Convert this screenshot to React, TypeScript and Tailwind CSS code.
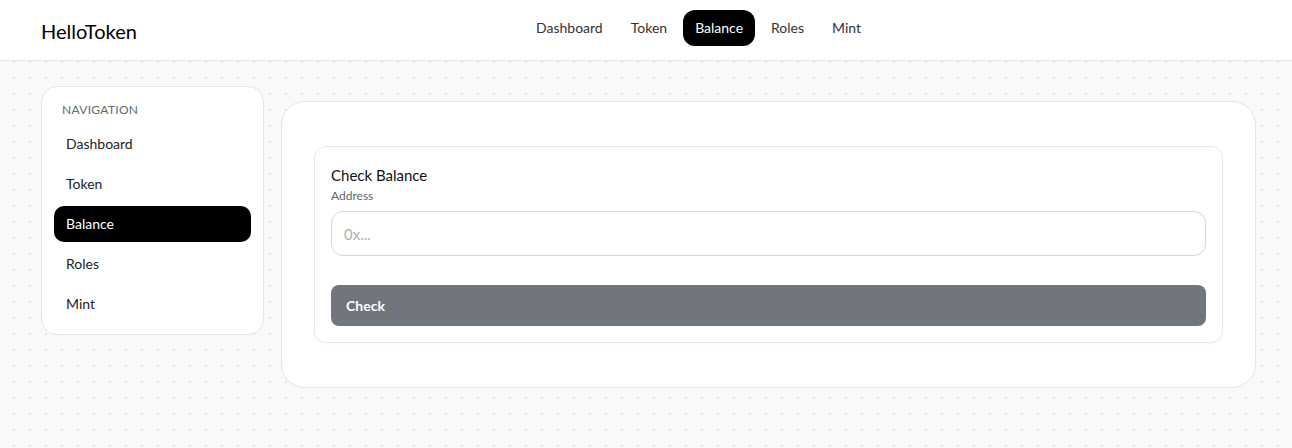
import { useState } from "react"

const links = ["Dashboard", "Token", "Balance", "Roles", "Mint"]

export default function App() {
  const [active, setActive] = useState("Balance")
  const [address, setAddress] = useState("")

  return (
    <div
      className="min-h-[448px] bg-[#f9f9f9] bg-[radial-gradient(#e4e4e4_1px,transparent_1px)] bg-[size:16px_16px] bg-[position:6px_6px] text-[#111]"
      style={{ fontFamily: "Lato, 'Open Sans', sans-serif" }}
    >
      {/* Header */}
      <header className="h-[61px] bg-white border-b border-[#e6e6e6] flex items-center pl-[41px]">
        <div className="w-[483px] text-xl text-black pt-[1px]">HelloToken</div>
        <nav className="flex items-center gap-1 mb-1">
          {links.map((l) => (
            <button
              key={l}
              onClick={() => setActive(l)}
              className={`h-9 px-3 rounded-xl text-sm ${
                active === l ? "bg-black text-white" : "text-[#333] hover:bg-gray-100"
              }`}
            >
              {l}
            </button>
          ))}
        </nav>
      </header>

      <div className="flex items-start gap-[17px] pl-[41px] pr-[36px] pt-[25px]">
        {/* Sidebar */}
        <aside className="w-[223px] shrink-0 bg-white border border-[#e5e5e5] rounded-2xl px-3 pt-[15px] pb-3">
          <div className="px-2 text-xs uppercase text-[#666] tracking-wide mb-[8px]">Navigation</div>
          <div className="flex flex-col gap-1">
            {links.map((l) => (
              <button
                key={l}
                onClick={() => setActive(l)}
                className={`h-9 px-3 rounded-[10px] text-left text-sm ${
                  active === l ? "bg-black text-white" : "text-[#222] hover:bg-gray-100"
                }`}
              >
                {l}
              </button>
            ))}
          </div>
        </aside>

        {/* Main */}
        <main className="flex-1 mt-[15px] bg-white border border-[#e5e5e5] rounded-3xl px-8 py-[44px]">
          <div className="border border-[#e8e8e8] rounded-xl px-4 pt-[18px] pb-4 shadow-[0_1px_2px_rgba(0,0,0,0.03)]">
            <h2 className="text-[15px] leading-5">Check Balance</h2>
            <label className="block text-xs text-[#666] mt-[3px] mb-[7px]">Address</label>
            <input
              value={address}
              onChange={(e) => setAddress(e.target.value)}
              placeholder="0x..."
              className="w-full h-[45px] px-3 rounded-xl border border-[#d6d6dc] text-[15px] placeholder:text-[#b0b0b0] outline-none"
            />
            <button className="mt-[29px] w-full h-[41px] rounded-lg bg-[#71757e] text-white text-sm font-bold text-left px-[15px]">
              Check
            </button>
          </div>
        </main>
      </div>
    </div>
  )
}
